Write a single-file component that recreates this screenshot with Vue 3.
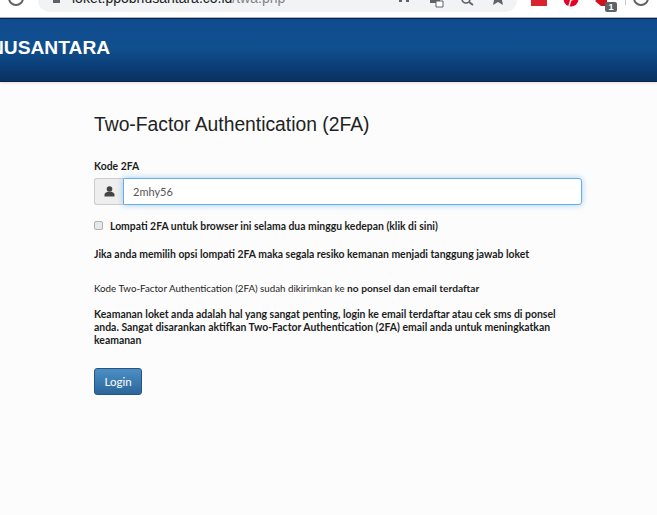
<template>
  <div class="page">
    <div class="toolbar">
      <svg class="reload" width="18" height="18" viewBox="0 0 18 18">
        <circle cx="9" cy="-2" r="7" fill="none" stroke="#5f6368" stroke-width="2" />
      </svg>
      <div class="urlbar">
        <svg class="lock" width="10" height="18" viewBox="0 0 10 18">
          <rect x="1" y="-4" width="7" height="7" fill="#5f6368" />
        </svg>
        <span class="url">loket.ppobnusantara.co.id<span class="url-path">/twa.php</span></span>
        <div class="url-icons">
          <svg width="14" height="18" viewBox="0 0 14 18"><path d="M1 -2h3v4H1zM8 -2h3v4H8z" fill="#5f6368" /></svg>
          <svg width="15" height="18" viewBox="0 0 15 18"><path d="M1 -3h10v6H1z" fill="#5f6368" /><path d="M7 1h7v6H7z" fill="#fff" stroke="#5f6368" /></svg>
          <svg width="14" height="18" viewBox="0 0 14 18"><circle cx="5" cy="-1" r="4" fill="none" stroke="#5f6368" stroke-width="1.6" /><path d="M8 2l4 3" stroke="#5f6368" stroke-width="1.8" /></svg>
          <svg width="12" height="18" viewBox="0 0 12 18"><path d="M1 5l1.500-7h7L11 5 6 2z" fill="#5f6368" /></svg>
        </div>
      </div>
      <div class="ext-icons">
        <div class="ext-red"></div>
        <svg width="16" height="18" viewBox="0 0 16 18">
          <circle cx="8" cy="-1" r="7.500" fill="#e60023" />
          <path d="M6 6l2-6.500c2 .5 3-.5 3-2" fill="none" stroke="#fff" stroke-width="1.500" />
        </svg>
        <div class="ext-badged">
          <svg width="12" height="18" viewBox="0 0 12 18"><path d="M0 1l5-4h7v9H6z" fill="#d0101c" /></svg>
          <span class="badge">1</span>
        </div>
        <div class="divider"></div>
        <svg width="18" height="18" viewBox="0 0 18 18">
          <circle cx="9" cy="-2" r="7" fill="none" stroke="#5f6368" stroke-width="2" />
        </svg>
      </div>
    </div>

    <header class="banner">
      <span class="brand">NUSANTARA</span>
    </header>

    <main class="content">
      <h1 class="title">Two-Factor Authentication (2FA)</h1>

      <label class="field-label">Kode 2FA</label>
      <div class="input-group">
        <span class="addon">
          <svg width="11" height="11" viewBox="0 0 11 11">
            <circle cx="5.500" cy="3" r="2.800" fill="#444" />
            <path d="M0.500 10.500V8.500C0.500 7 2.500 6.300 3.500 5.800h4c1 .5 3 1.200 3 2.700v2z" fill="#444" />
          </svg>
        </span>
        <input class="code-input" type="text" value="2mhy56" />
      </div>

      <label class="skip">
        <input class="skip-box" type="checkbox" />
        <span>Lompati 2FA untuk browser ini selama dua minggu kedepan (klik di sini)</span>
      </label>

      <p class="warn">Jika anda memilih opsi lompati 2FA maka segala resiko kemanan menjadi tanggung jawab loket</p>

      <p class="sent">Kode Two-Factor Authentication (2FA) sudah dikirimkan ke <b>no ponsel dan email terdaftar</b></p>

      <p class="note">Keamanan loket anda adalah hal yang sangat penting, login ke email terdaftar atau cek sms di ponsel anda. Sangat disarankan aktifkan Two-Factor Authentication (2FA) email anda untuk meningkatkan keamanan</p>

      <button class="login" type="button">Login</button>
    </main>
  </div>
</template>

<script setup>
</script>

<style>
html, body {
  margin: 0;
  background: #fcfcfc;
}
</style>

<style scoped>
.page {
  width: 657px;
  height: 515px;
  overflow: hidden;
  background: #fcfcfc;
  font-family: "Lato", "Liberation Sans", sans-serif;
  color: #1c1c1c;
}

.toolbar {
  height: 17px;
  display: flex;
  background: #fff;
  overflow: hidden;
  border-bottom: 1px solid #b5b7b9;
}

.reload {
  margin: 0 13px 0 7px;
}

.urlbar {
  width: 479px;
  height: 12px;
  display: flex;
  background: #f1f3f4;
  border-radius: 0 0 14px 14px;
  box-sizing: border-box;
  padding-left: 14px;
}

.lock {
  margin-right: 10px;
  flex: none;
}

.url {
  font-family: "Liberation Sans", sans-serif;
  font-size: 14px;
  line-height: 14px;
  margin-top: -9px;
  color: #202124;
  white-space: nowrap;
}

.url-path {
  color: #80868b;
}

.url-icons {
  margin-left: auto;
  display: flex;
  gap: 17px;
  padding-right: 13px;
}

.ext-icons {
  display: flex;
  margin-left: 14px;
}

.ext-red {
  width: 16px;
  height: 6px;
  background: #d9232e;
  margin-right: 16px;
}

.ext-badged {
  position: relative;
  margin-left: 16px;
  width: 12px;
  margin-right: 18px;
}

.badge {
  position: absolute;
  left: 10px;
  top: 2px;
  width: 12px;
  height: 10px;
  border-radius: 2px;
  background: #5f6368;
  color: #fff;
  font: bold 9px/10px "Liberation Sans", sans-serif;
  text-align: center;
}

.divider {
  width: 1px;
  height: 5px;
  background: #c8cacc;
  margin-right: 6px;
}

.banner {
  height: 64px;
  display: flex;
  align-items: center;
  padding-bottom: 5px;
  border-top: 1px solid #04244c;
  border-bottom: 1px solid #04244c;
  box-sizing: border-box;
  background: linear-gradient(#104b8f 0%, #10508f 45%, #0b3f78 75%, #0a3161 100%);
  box-shadow: 0 1px 3px rgba(0, 0, 0, .12);
}

.brand {
  margin-left: -10px;
  font-family: "Liberation Sans", sans-serif;
  font-weight: 700;
  font-size: 19.200px;
  color: #fff;
}

.content {
  width: 488px;
  margin-left: 94px;
}

.title {
  margin: 31px 0 23px;
  font-family: "Liberation Sans", sans-serif;
  font-weight: 400;
  font-size: 19.300px;
  line-height: 24px;
  color: #222;
}

.field-label {
  display: block;
  font-weight: 700;
  font-size: 10.400px;
  line-height: 13px;
  margin-bottom: 5px;
}

.input-group {
  display: flex;
  height: 27px;
}

.addon {
  width: 29px;
  display: flex;
  align-items: center;
  justify-content: center;
  background: #eee;
  border: 1px solid #ccc;
  border-right: 0;
  border-radius: 3px 0 0 3px;
  box-sizing: border-box;
}

.code-input {
  flex: 1;
  min-width: 0;
  box-sizing: border-box;
  border: 1px solid #66afe9;
  border-radius: 0 3px 3px 0;
  background: #fff;
  padding: 0 9px;
  font-family: "Lato", sans-serif;
  font-size: 11px;
  color: #555;
  outline: none;
  box-shadow: 0 0 6px rgba(102, 175, 233, .6);
}

.skip {
  display: flex;
  align-items: center;
  margin-top: 14px;
  font-weight: 700;
  font-size: 10.400px;
  line-height: 14px;
}

.skip-box {
  appearance: none;
  width: 9px;
  height: 9px;
  margin: 0 7px 2px 0;
  background: #e8e8e8;
  border: 1px solid #b0b0b0;
  border-radius: 2px;
  box-sizing: border-box;
}

.warn {
  margin: 14px 0 0;
  font-weight: 700;
  font-size: 10.400px;
  line-height: 14px;
}

.sent {
  margin: 20px 0 0;
  font-size: 9.750px;
  line-height: 14px;
}

.sent b {
  font-size: 10.200px;
}

.note {
  max-width: 470px;
  margin: 13px 0 0;
  font-weight: 700;
  font-size: 10.450px;
  line-height: 13px;
}

.login {
  display: block;
  width: 48px;
  height: 27px;
  margin-top: 21px;
  padding: 0;
  border: 1px solid #245580;
  border-radius: 3px;
  background: linear-gradient(#4d8fc4, #2b669c);
  color: #fff;
  font-family: "Lato", sans-serif;
  font-weight: 400;
  font-size: 11.500px;
}
</style>
